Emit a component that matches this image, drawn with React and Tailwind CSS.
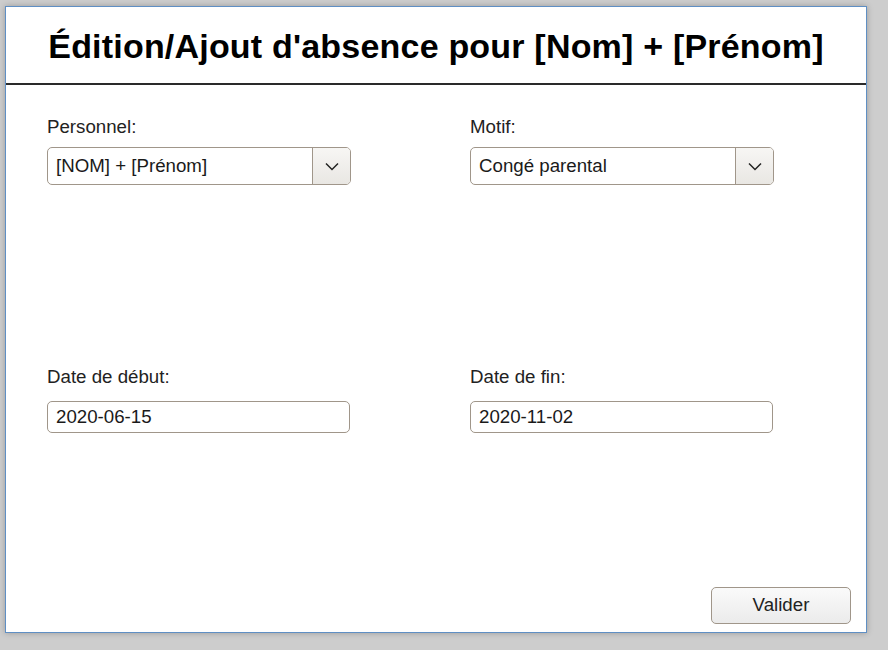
import React from 'react';

const Chevron = () => (
  <svg width="16" height="16" viewBox="0 0 16 16" fill="none" stroke="#222" strokeWidth="1.5">
    <path d="M2 5.5 L8 11.5 L14 5.5" />
  </svg>
);

const SelectField = ({ label, value }) => (
  <div className="w-[304px]">
    <p className="text-[18.7px] text-[#222] leading-[20px] mb-[10px]">{label}</p>
    <div className="flex h-[38px] rounded-[5px] border border-[#a0968a] bg-white overflow-hidden">
      <div className="flex-1 flex items-center px-[8px] text-[18.7px] text-[#1a1a1a]">{value}</div>
      <div className="w-[38px] flex items-center justify-center border-l border-[#a0968a] bg-gradient-to-b from-[#f7f6f4] to-[#e9e7e3]">
        <Chevron />
      </div>
    </div>
  </div>
);

const DateField = ({ label, value }) => (
  <div className="w-[303px]">
    <p className="text-[18.7px] text-[#222] leading-[20px] mb-[14px]">{label}</p>
    <div className="h-[32px] flex items-center rounded-[5px] border border-[#a0968a] bg-white px-[8px] text-[18.7px] text-[#1a1a1a]">
      {value}
    </div>
  </div>
);

export default function App() {
  return (
    <div className="w-[888px] h-[650px] bg-[#cdcdcd] pt-[6px] pl-[5px] font-['Liberation_Sans',Arial,sans-serif]">
      <div className="w-[862px] h-[627px] bg-white border border-[#5f8fc4] shadow-[0_0_6px_rgba(0,0,0,0.25)] flex flex-col">
        <div className="h-[78px] border-b-2 border-[#2a2a2a] flex items-center justify-center">
          <h1 className="text-[34px] font-bold text-black tracking-[0.2px] pt-[3px]">Édition/Ajout d'absence pour [Nom] + [Prénom]</h1>
        </div>
        <div className="flex-1 flex flex-col pl-[41px] pt-[32px] pr-[15px] pb-[8px]">
          <div className="flex gap-[119px]">
            <SelectField label="Personnel:" value="[NOM] + [Prénom]" />
            <SelectField label="Motif:" value="Congé parental" />
          </div>
          <div className="flex gap-[120px] mt-[182px]">
            <DateField label="Date de début:" value="2020-06-15" />
            <DateField label="Date de fin:" value="2020-11-02" />
          </div>
          <div className="mt-auto flex justify-end">
            <button className="w-[140px] h-[37px] rounded-[5px] border border-[#a0968a] bg-gradient-to-b from-[#fafafa] to-[#ebebeb] text-[18.7px] text-[#222]">
              Valider
            </button>
          </div>
        </div>
      </div>
    </div>
  );
}
